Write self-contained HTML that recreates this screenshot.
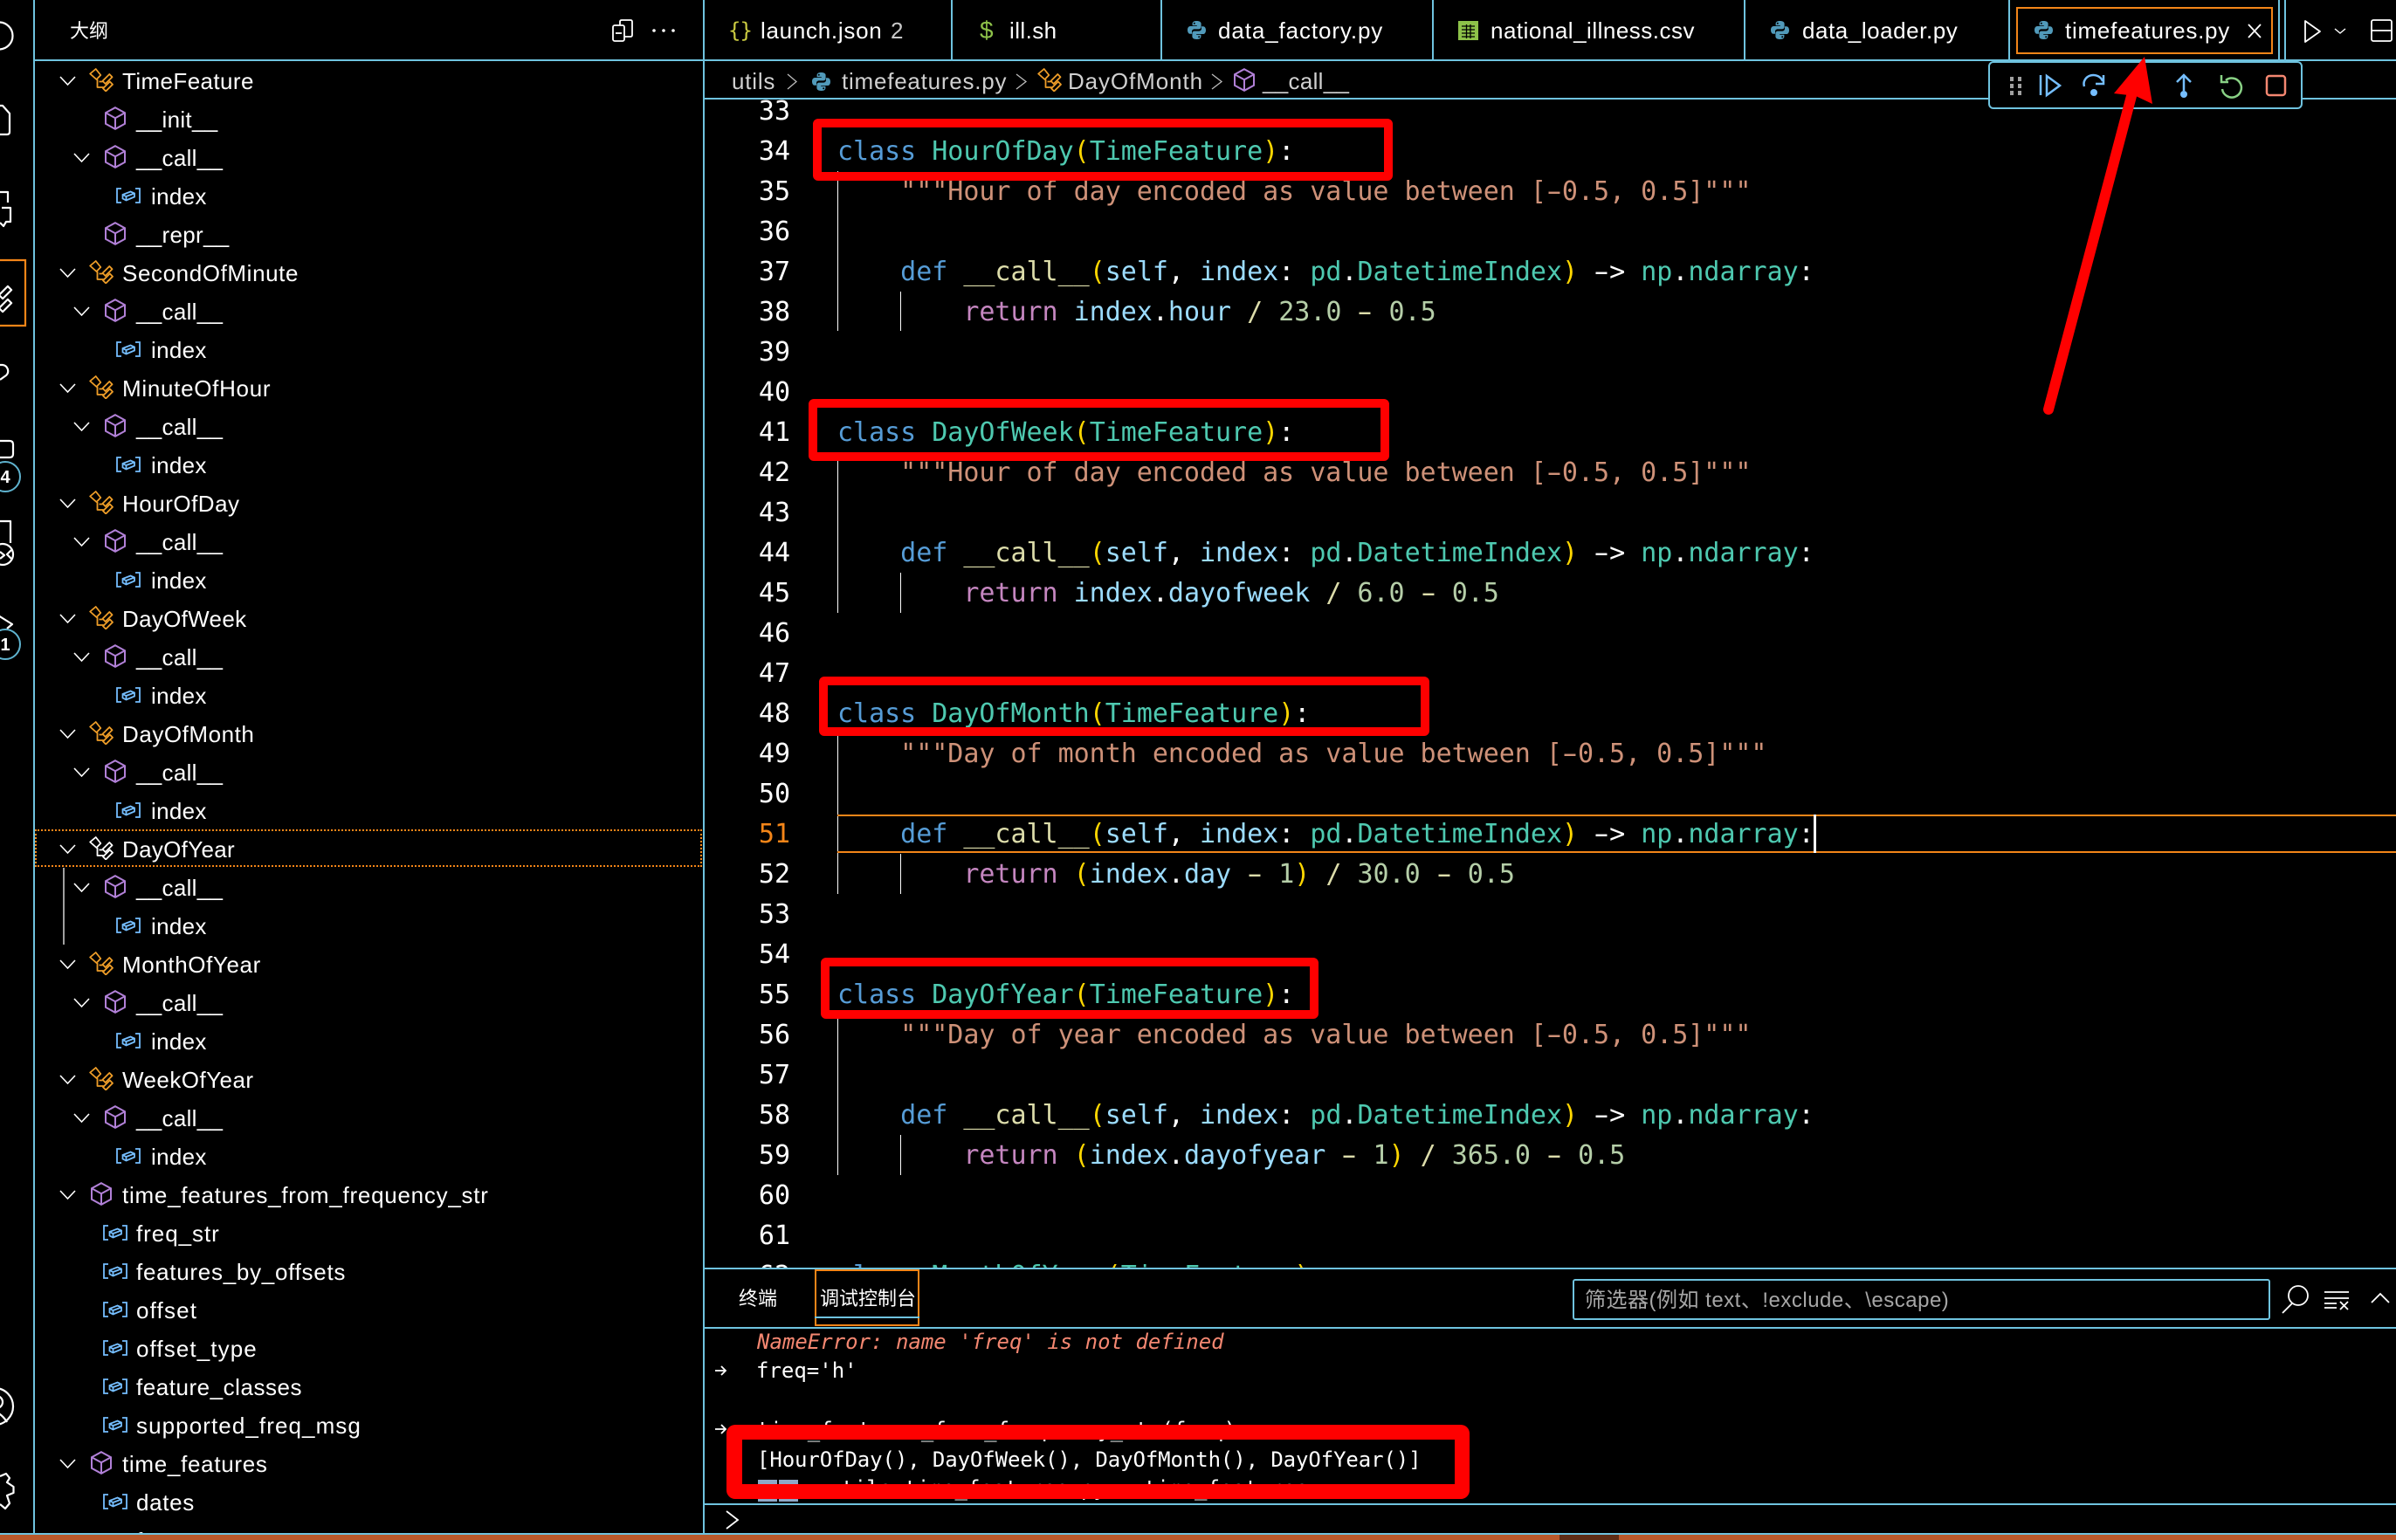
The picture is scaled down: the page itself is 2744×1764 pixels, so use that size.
<!DOCTYPE html>
<html lang="zh">
<head>
<meta charset="utf-8">
<title>timefeatures.py</title>
<style>
html,body{margin:0;padding:0;background:#000;width:2744px;height:1764px;overflow:hidden}
body{position:relative;font-family:"Liberation Sans","Noto Sans CJK SC",sans-serif;color:#fff}
.a{position:absolute}
.h{position:absolute;background:#6fc3df;height:2px}
.v{position:absolute;background:#6fc3df;width:2px}
.tab{position:absolute;top:0;height:68px;line-height:70px;font-size:26px;letter-spacing:.5px;white-space:pre}
.bc{position:absolute;top:70px;height:42px;line-height:46px;font-size:26px;letter-spacing:.3px;color:#d0d0d0;white-space:pre}
#side{position:absolute;left:40px;top:70px;width:765px;height:1686px;overflow:hidden}
.r{position:relative;height:44px;line-height:46px;font-size:26px;letter-spacing:.3px;white-space:pre}
.r svg{position:absolute;overflow:visible}
.r span{position:absolute}
.ch{width:19px;height:11px;top:17px;color:#fff}
.c0{left:28px}.c1{left:44px}
.cl{width:28px;height:27px;left:62px;top:8px;color:#ee9d28}
.cb0{width:24px;height:27px;left:64px;top:8px;color:#b180d7}
.cb1{width:24px;height:27px;left:80px;top:8px;color:#b180d7}
.vr1{width:28px;height:18px;left:78px;top:13px;color:#75beff}
.vr2{width:28px;height:18px;left:93px;top:13px;color:#75beff}
.t0{left:100px}.t1{left:116px}.t2{left:133px}
#ed{position:absolute;left:807px;top:114px;width:1937px;height:1338px;overflow:hidden;font-family:"DejaVu Sans Mono","Liberation Mono",monospace;font-size:30px;letter-spacing:-.02px;color:#fff}
.l{position:absolute;left:152px;height:46px;line-height:46px;white-space:pre;margin-top:1px}
.n{position:absolute;left:40px;width:58px;text-align:right;height:46px;line-height:46px;margin-top:1px}
.k{color:#569cd6}.c{color:#4ec9b0}.b{color:#ffd700}.s{color:#ce9178}.e{color:#c586c0}.i{color:#9cdcfe}.f{color:#dcdcaa}.m{color:#b5cea8}
.mn{display:inline-block;transform:scaleX(1.7)}
.g{position:absolute;background:#fff;width:1px}
.box{position:absolute;border:10px solid #f00;border-radius:6px;box-sizing:border-box}
.con{position:absolute;left:867px;font-family:"DejaVu Sans Mono","Liberation Mono",monospace;font-size:24px;white-space:pre;height:34px;line-height:34px}
</style>
</head>
<body>
<svg width="0" height="0" style="position:absolute">
<symbol id="chev" viewBox="0 0 19 11"><path d="M1 1 9.5 10 18 1" fill="none" stroke="currentColor" stroke-width="1.6"/></symbol>
<symbol id="cls" viewBox="0 0 28 27"><g fill="none" stroke="currentColor" stroke-width="1.8" stroke-linejoin="round"><path d="M7.700 1 13.300 8 8.500 13 1.200 6.500Z"/><path d="M15.500 14.800 23.300 7 26.500 10.200 18.700 18Z"/><path d="M16 23.300 23.800 15.500 27 18.700 19.200 26.500Z"/><path d="M9.500 13V22H16.500M11.500 15.500H15.500"/></g></symbol>
<symbol id="cube" viewBox="0 0 24 27"><path d="M12 1.200 23 7.200V19.800L12 25.800 1 19.800V7.200ZM1 7.200 12 13.200 23 7.200M12 13.200V25.800" fill="none" stroke="currentColor" stroke-width="2"/></symbol>
<symbol id="var" viewBox="0 0 28 18"><g fill="none" stroke="currentColor" stroke-width="1.8"><path d="M6 1H1V17H6M22 1H27V17H22"/><path d="M7.500 8 16.500 4.500 21 6.500V10.500L11.500 14.500 7.500 12.500ZM7.500 8 11.500 10 21 6.500M11.500 10V14.500"/></g></symbol>
<symbol id="py" viewBox="0 0 21 21"><g fill="#519aba"><path d="M10.400 0C7 0 5.600 1.300 5.600 3.200V5.200H10.800V6H3.200C1.200 6 0 7.800 0 10.400 0 13 1.200 14.800 3 14.800H5V12.200C5 10.500 6.200 9.400 7.800 9.400H13C14.400 9.400 15.600 8.300 15.600 6.800V3.200C15.600 1.300 13.800 0 10.400 0ZM7.800 1.800A1 1 0 1 1 7.800 3.800 1 1 0 0 1 7.800 1.800Z"/><path d="M10.600 21C14 21 15.400 19.700 15.400 17.800V15.800H10.200V15H17.800C19.800 15 21 13.200 21 10.600 21 8 19.800 6.200 18 6.200H16V8.800C16 10.500 14.800 11.600 13.200 11.600H8C6.600 11.600 5.400 12.700 5.400 14.200V17.800C5.400 19.700 7.200 21 10.600 21ZM13.200 19.200A1 1 0 1 1 13.200 17.200 1 1 0 0 1 13.200 19.200Z"/></g></symbol>
</svg>

<!-- structural lines -->
<div class="v" style="left:38px;top:0;height:1756px"></div>
<div class="v" style="left:805px;top:0;height:1756px"></div>
<div class="h" style="left:38px;top:68px;width:2706px"></div>
<div class="h" style="left:805px;top:112px;width:1939px"></div>
<div class="h" style="left:805px;top:1452px;width:1939px"></div>
<div class="h" style="left:805px;top:1520px;width:1939px"></div>
<div class="h" style="left:805px;top:1722px;width:1939px"></div>
<div class="h" style="left:0;top:1756px;width:2744px"></div>
<div class="a" style="left:0;top:1758px;width:2744px;height:6px;background:#b9592b"></div>
<div class="a" style="left:1786px;top:1758px;width:68px;height:6px;background:#5e2d16"></div>

<!-- tab separators -->
<div class="v" style="left:1089px;top:0;height:68px"></div>
<div class="v" style="left:1329px;top:0;height:68px"></div>
<div class="v" style="left:1640px;top:0;height:68px"></div>
<div class="v" style="left:1997px;top:0;height:68px"></div>
<div class="v" style="left:2300px;top:0;height:68px"></div>
<div class="v" style="left:2609px;top:0;height:68px"></div>
<div class="v" style="left:2616px;top:0;height:68px"></div>

<!-- sidebar header -->
<div class="a" style="left:80px;top:15px;font-size:22px;line-height:42px;letter-spacing:0">大纲</div>

<!-- outline -->
<div id="side">
<div class="r"><svg class="ch c0"><use href="#chev"/></svg><svg class="cl"><use href="#cls"/></svg><span class="t0" style="letter-spacing:.4px">TimeFeature</span></div>
<div class="r"><svg class="cb1"><use href="#cube"/></svg><span class="t1">__init__</span></div>
<div class="r"><svg class="ch c1"><use href="#chev"/></svg><svg class="cb1"><use href="#cube"/></svg><span class="t1">__call__</span></div>
<div class="r"><svg class="vr2"><use href="#var"/></svg><span class="t2">index</span></div>
<div class="r"><svg class="cb1"><use href="#cube"/></svg><span class="t1">__repr__</span></div>
<div class="r"><svg class="ch c0"><use href="#chev"/></svg><svg class="cl"><use href="#cls"/></svg><span class="t0" style="letter-spacing:.6px">SecondOfMinute</span></div>
<div class="r"><svg class="ch c1"><use href="#chev"/></svg><svg class="cb1"><use href="#cube"/></svg><span class="t1">__call__</span></div>
<div class="r"><svg class="vr2"><use href="#var"/></svg><span class="t2">index</span></div>
<div class="r"><svg class="ch c0"><use href="#chev"/></svg><svg class="cl"><use href="#cls"/></svg><span class="t0" style="letter-spacing:.7px">MinuteOfHour</span></div>
<div class="r"><svg class="ch c1"><use href="#chev"/></svg><svg class="cb1"><use href="#cube"/></svg><span class="t1">__call__</span></div>
<div class="r"><svg class="vr2"><use href="#var"/></svg><span class="t2">index</span></div>
<div class="r"><svg class="ch c0"><use href="#chev"/></svg><svg class="cl"><use href="#cls"/></svg><span class="t0" style="letter-spacing:.5px">HourOfDay</span></div>
<div class="r"><svg class="ch c1"><use href="#chev"/></svg><svg class="cb1"><use href="#cube"/></svg><span class="t1">__call__</span></div>
<div class="r"><svg class="vr2"><use href="#var"/></svg><span class="t2">index</span></div>
<div class="r"><svg class="ch c0"><use href="#chev"/></svg><svg class="cl"><use href="#cls"/></svg><span class="t0">DayOfWeek</span></div>
<div class="r"><svg class="ch c1"><use href="#chev"/></svg><svg class="cb1"><use href="#cube"/></svg><span class="t1">__call__</span></div>
<div class="r"><svg class="vr2"><use href="#var"/></svg><span class="t2">index</span></div>
<div class="r"><svg class="ch c0"><use href="#chev"/></svg><svg class="cl"><use href="#cls"/></svg><span class="t0" style="letter-spacing:.55px">DayOfMonth</span></div>
<div class="r"><svg class="ch c1"><use href="#chev"/></svg><svg class="cb1"><use href="#cube"/></svg><span class="t1">__call__</span></div>
<div class="r"><svg class="vr2"><use href="#var"/></svg><span class="t2">index</span></div>
<div class="r"><svg class="ch c0"><use href="#chev"/></svg><svg class="cl" style="color:#fff"><use href="#cls"/></svg><span class="t0">DayOfYear</span></div>
<div class="r"><svg class="ch c1"><use href="#chev"/></svg><svg class="cb1"><use href="#cube"/></svg><span class="t1">__call__</span></div>
<div class="r"><svg class="vr2"><use href="#var"/></svg><span class="t2">index</span></div>
<div class="r"><svg class="ch c0"><use href="#chev"/></svg><svg class="cl"><use href="#cls"/></svg><span class="t0" style="letter-spacing:.6px">MonthOfYear</span></div>
<div class="r"><svg class="ch c1"><use href="#chev"/></svg><svg class="cb1"><use href="#cube"/></svg><span class="t1">__call__</span></div>
<div class="r"><svg class="vr2"><use href="#var"/></svg><span class="t2">index</span></div>
<div class="r"><svg class="ch c0"><use href="#chev"/></svg><svg class="cl"><use href="#cls"/></svg><span class="t0" style="letter-spacing:.45px">WeekOfYear</span></div>
<div class="r"><svg class="ch c1"><use href="#chev"/></svg><svg class="cb1"><use href="#cube"/></svg><span class="t1">__call__</span></div>
<div class="r"><svg class="vr2"><use href="#var"/></svg><span class="t2">index</span></div>
<div class="r"><svg class="ch c0"><use href="#chev"/></svg><svg class="cb0"><use href="#cube"/></svg><span class="t0" style="letter-spacing:.74px">time_features_from_frequency_str</span></div>
<div class="r"><svg class="vr1"><use href="#var"/></svg><span class="t1" style="letter-spacing:.95px">freq_str</span></div>
<div class="r"><svg class="vr1"><use href="#var"/></svg><span class="t1" style="letter-spacing:.72px">features_by_offsets</span></div>
<div class="r"><svg class="vr1"><use href="#var"/></svg><span class="t1" style="letter-spacing:1.17px">offset</span></div>
<div class="r"><svg class="vr1"><use href="#var"/></svg><span class="t1" style="letter-spacing:1.1px">offset_type</span></div>
<div class="r"><svg class="vr1"><use href="#var"/></svg><span class="t1" style="letter-spacing:.53px">feature_classes</span></div>
<div class="r"><svg class="vr1"><use href="#var"/></svg><span class="t1" style="letter-spacing:1.08px">supported_freq_msg</span></div>
<div class="r"><svg class="ch c0"><use href="#chev"/></svg><svg class="cb0"><use href="#cube"/></svg><span class="t0" style="letter-spacing:.7px">time_features</span></div>
<div class="r"><svg class="vr1"><use href="#var"/></svg><span class="t1" style="letter-spacing:.65px">dates</span></div>
<div class="r"><span class="t1">freq</span></div>
</div>
<div class="a" style="left:40px;top:950px;width:764px;height:43px;box-sizing:border-box;border:2px dotted #f38518"></div>
<div class="a" style="left:72px;top:994px;width:2px;height:88px;background:#a0a0a0"></div>

<!-- tabs -->
<div class="tab" style="left:834px;color:#cbcb41;font-family:'DejaVu Sans Mono',monospace;font-size:24px;letter-spacing:-1px">{}</div>
<div class="tab" style="left:871px;letter-spacing:.72px">launch.json</div>
<div class="tab" style="left:1020px;color:#c8c8c8">2</div>
<div class="tab" style="left:1122px;color:#8dc149;font-size:28px">$</div>
<div class="tab" style="left:1156px;letter-spacing:.42px">ill.sh</div>
<svg class="a" style="left:1360px;top:24px;width:21px;height:21px"><use href="#py"/></svg>
<div class="tab" style="left:1395px;letter-spacing:.89px">data_factory.py</div>
<svg class="a" style="left:1670px;top:24px" width="23" height="22"><rect width="23" height="22" fill="#8dc149"/><path d="M4 6H19M4 10H19M4 14H19M4 18H19M9.500 4V20M14 4V20" stroke="#000" stroke-width="1.300"/></svg>
<div class="tab" style="left:1707px">national_illness.csv</div>
<svg class="a" style="left:2028px;top:24px;width:21px;height:21px"><use href="#py"/></svg>
<div class="tab" style="left:2064px;letter-spacing:.55px">data_loader.py</div>
<div class="a" style="left:2309px;top:8px;width:294px;height:54px;box-sizing:border-box;border:2px solid #f38518"></div>
<svg class="a" style="left:2330px;top:24px;width:21px;height:21px"><use href="#py"/></svg>
<div class="tab" style="left:2365px;letter-spacing:.75px">timefeatures.py</div>

<!-- breadcrumbs -->
<div class="bc" style="left:838px;letter-spacing:.8px">utils</div>
<svg class="a" style="left:930px;top:83px;width:21px;height:21px"><use href="#py"/></svg>
<div class="bc" style="left:964px;letter-spacing:.77px">timefeatures.py</div>
<svg class="a" style="left:1188px;top:78px;width:28px;height:27px;color:#ee9d28"><use href="#cls"/></svg>
<div class="bc" style="left:1223px;letter-spacing:.9px">DayOfMonth</div>
<svg class="a" style="left:1413px;top:78px;width:24px;height:27px;color:#b180d7"><use href="#cube"/></svg>
<div class="bc" style="left:1446px">__call__</div>

<!-- editor -->
<div id="ed">
<div class="g" style="left:152px;top:82px;height:183px"></div>
<div class="g" style="left:224px;top:220px;height:45px"></div>
<div class="g" style="left:152px;top:404px;height:184px"></div>
<div class="g" style="left:224px;top:542px;height:46px"></div>
<div class="g" style="left:152px;top:726px;height:184px"></div>
<div class="g" style="left:224px;top:864px;height:46px"></div>
<div class="g" style="left:152px;top:1048px;height:184px"></div>
<div class="g" style="left:224px;top:1186px;height:46px"></div>
<div class="a" style="left:152px;top:819px;width:1785px;height:44px;box-sizing:border-box;border-top:2px solid #f38518;border-bottom:2px solid #f38518"></div>
<div class="a" style="left:1270px;top:819px;width:3px;height:44px;background:#fff"></div>

<div class="n" style="top:-10px">33</div>
<div class="n" style="top:36px">34</div><div class="l" style="top:36px"><span class="k">class</span> <span class="c">HourOfDay</span><span class="b">(</span><span class="c">TimeFeature</span><span class="b">)</span>:</div>
<div class="n" style="top:82px">35</div><div class="l" style="top:82px"><span class="s">    """Hour of day encoded as value between [<span class="mn">-</span>0.5, 0.5]"""</span></div>
<div class="n" style="top:128px">36</div>
<div class="n" style="top:174px">37</div><div class="l" style="top:174px">    <span class="k">def</span> <span class="f">__call__</span><span class="b">(</span><span class="i">self</span>, <span class="i">index</span>: <span class="c">pd</span>.<span class="c">DatetimeIndex</span><span class="b">)</span> <span class="mn">-</span>&gt; <span class="c">np</span>.<span class="c">ndarray</span>:</div>
<div class="n" style="top:220px">38</div><div class="l" style="top:220px">        <span class="e">return</span> <span class="i">index</span>.<span class="i">hour</span> <span class="f">/</span> <span class="m">23.0</span> <span class="f mn">-</span> <span class="m">0.5</span></div>
<div class="n" style="top:266px">39</div>
<div class="n" style="top:312px">40</div>
<div class="n" style="top:358px">41</div><div class="l" style="top:358px"><span class="k">class</span> <span class="c">DayOfWeek</span><span class="b">(</span><span class="c">TimeFeature</span><span class="b">)</span>:</div>
<div class="n" style="top:404px">42</div><div class="l" style="top:404px"><span class="s">    """Hour of day encoded as value between [<span class="mn">-</span>0.5, 0.5]"""</span></div>
<div class="n" style="top:450px">43</div>
<div class="n" style="top:496px">44</div><div class="l" style="top:496px">    <span class="k">def</span> <span class="f">__call__</span><span class="b">(</span><span class="i">self</span>, <span class="i">index</span>: <span class="c">pd</span>.<span class="c">DatetimeIndex</span><span class="b">)</span> <span class="mn">-</span>&gt; <span class="c">np</span>.<span class="c">ndarray</span>:</div>
<div class="n" style="top:542px">45</div><div class="l" style="top:542px">        <span class="e">return</span> <span class="i">index</span>.<span class="i">dayofweek</span> <span class="f">/</span> <span class="m">6.0</span> <span class="f mn">-</span> <span class="m">0.5</span></div>
<div class="n" style="top:588px">46</div>
<div class="n" style="top:634px">47</div>
<div class="n" style="top:680px">48</div><div class="l" style="top:680px"><span class="k">class</span> <span class="c">DayOfMonth</span><span class="b">(</span><span class="c">TimeFeature</span><span class="b">)</span>:</div>
<div class="n" style="top:726px">49</div><div class="l" style="top:726px"><span class="s">    """Day of month encoded as value between [<span class="mn">-</span>0.5, 0.5]"""</span></div>
<div class="n" style="top:772px">50</div>
<div class="n" style="top:818px;color:#f38518">51</div><div class="l" style="top:818px">    <span class="k">def</span> <span class="f">__call__</span><span class="b">(</span><span class="i">self</span>, <span class="i">index</span>: <span class="c">pd</span>.<span class="c">DatetimeIndex</span><span class="b">)</span> <span class="mn">-</span>&gt; <span class="c">np</span>.<span class="c">ndarray</span>:</div>
<div class="n" style="top:864px">52</div><div class="l" style="top:864px">        <span class="e">return</span> <span class="b">(</span><span class="i">index</span>.<span class="i">day</span> <span class="f mn">-</span> <span class="m">1</span><span class="b">)</span> <span class="f">/</span> <span class="m">30.0</span> <span class="f mn">-</span> <span class="m">0.5</span></div>
<div class="n" style="top:910px">53</div>
<div class="n" style="top:956px">54</div>
<div class="n" style="top:1002px">55</div><div class="l" style="top:1002px"><span class="k">class</span> <span class="c">DayOfYear</span><span class="b">(</span><span class="c">TimeFeature</span><span class="b">)</span>:</div>
<div class="n" style="top:1048px">56</div><div class="l" style="top:1048px"><span class="s">    """Day of year encoded as value between [<span class="mn">-</span>0.5, 0.5]"""</span></div>
<div class="n" style="top:1094px">57</div>
<div class="n" style="top:1140px">58</div><div class="l" style="top:1140px">    <span class="k">def</span> <span class="f">__call__</span><span class="b">(</span><span class="i">self</span>, <span class="i">index</span>: <span class="c">pd</span>.<span class="c">DatetimeIndex</span><span class="b">)</span> <span class="mn">-</span>&gt; <span class="c">np</span>.<span class="c">ndarray</span>:</div>
<div class="n" style="top:1186px">59</div><div class="l" style="top:1186px">        <span class="e">return</span> <span class="b">(</span><span class="i">index</span>.<span class="i">dayofyear</span> <span class="f mn">-</span> <span class="m">1</span><span class="b">)</span> <span class="f">/</span> <span class="m">365.0</span> <span class="f mn">-</span> <span class="m">0.5</span></div>
<div class="n" style="top:1232px">60</div>
<div class="n" style="top:1278px">61</div>
<div class="n" style="top:1324px">62</div><div class="l" style="top:1324px"><span class="k">class</span> <span class="c">MonthOfYear</span><span class="b">(</span><span class="c">TimeFeature</span><span class="b">)</span>:</div>
</div>

<!-- panel header -->
<div class="a" style="left:846px;top:1467px;font-size:22px;line-height:42px">终端</div>
<div class="a" style="left:939px;top:1467px;font-size:22px;line-height:42px">调试控制台</div>
<div class="a" style="left:933px;top:1454px;width:120px;height:65px;box-sizing:border-box;border:2px solid #f38518"></div>
<div class="h" style="left:933px;top:1508px;width:120px"></div>
<div class="a" style="left:1801px;top:1465px;width:799px;height:47px;box-sizing:border-box;border:2px solid #6fc3df;border-radius:3px"></div>
<div class="a" style="left:1815px;top:1467px;height:46px;line-height:46px;font-size:24px;letter-spacing:.5px;color:#a6a6a6;white-space:pre">筛选器(例如 text、!exclude、\escape)</div>

<!-- console -->
<div style="position:absolute;left:807px;top:1522px;width:1937px;height:200px;overflow:hidden">
<div class="con" style="left:60px;top:-2px;color:#f48771;font-style:italic">NameError: name 'freq' is not defined</div>
<div class="con" style="left:59px;top:31px">freq='h'</div>
<div class="con" style="left:60px;top:99px">time_features_from_frequency_str(freq)</div>
<div class="con" style="left:60px;top:133px;letter-spacing:-.1px">[HourOfDay(), DayOfWeek(), DayOfMonth(), DayOfYear()]</div>
<div class="a" style="left:61px;top:173px;width:22px;height:25px;background:#8ea8c8"></div>
<div class="a" style="left:85px;top:173px;width:22px;height:25px;background:#8ea8c8"></div>
<div class="con" style="left:142px;top:166px">utils.time_features.py   time_features</div>
</div>

<!-- debug toolbar -->
<div class="a" style="left:2277px;top:70px;width:360px;height:55px;box-sizing:border-box;background:#000;border:2px solid #6fc3df;border-radius:6px"></div>

<!-- page-coordinate icons -->
<svg class="a" style="left:0;top:0" width="2744" height="1764" viewBox="0 0 2744 1764" fill="none">
<!-- activity bar -->
<g stroke="#fff" stroke-width="2.200" stroke-linejoin="round">
<circle cx="-1" cy="41" r="15.500"/>
<path d="M-2 121H3L11 130V151Q11 154 8 154H-2"/>
<path d="M-2 220H9V232M2 238H12V254H7L4 259 0 255"/>
<path d="M-1.100 337.900 8.900 327.900 13.100 332.100 3.100 342.100Z"/>
<path d="M-1.100 352.900 8.900 342.900 13.100 347.100 3.100 357.100Z"/>
<path d="M-4 418H3A7 7 0 0 1 7 430L0 435"/>
<path d="M-2 505H11Q15 505 15 509V520Q15 524 11 524H-2"/>
<path d="M-2 597H12V622"/>
<circle cx="3" cy="635" r="12"/>
<path d="M0 632 5 636 0 640M13 630 8 635 13 640"/>
<path d="M-2 705 14 715 8 720"/>
<circle cx="-6" cy="1611" r="21"/>
<circle cx="-4" cy="1606" r="7"/>
<path d="M-3 1618Q4 1622 8 1629"/>
<path d="M0 1691 7 1688 11 1693 8 1698 15.500 1703V1710L8 1713 11 1722 6 1728 0 1723"/>
</g>
<path d="M-4 298H29V373H-4" stroke="#f38518" stroke-width="2.200"/>
<circle cx="6" cy="546" r="17" fill="#000" stroke="#5fb3cf" stroke-width="2"/>
<circle cx="6" cy="738" r="17" fill="#000" stroke="#5fb3cf" stroke-width="2"/>
<text x="6" y="553" text-anchor="middle" fill="#fff" font-size="20" font-weight="bold" font-family="Liberation Sans,sans-serif">4</text>
<text x="6" y="745" text-anchor="middle" fill="#fff" font-size="20" font-weight="bold" font-family="Liberation Sans,sans-serif">1</text>
<!-- header icons -->
<g stroke="#fff" stroke-width="1.800">
<path d="M710 29V25Q710 23 712 23H722Q724 23 724 25V40Q724 42 722 42H715"/>
<rect x="702" y="29" width="13" height="18" rx="2"/>
<path d="M705 38H712"/>
<path d="M2575 28 2589 43M2589 28 2575 43"/>
<path d="M2640 24 2657 36 2640 48Z" stroke-linejoin="round"/>
<path d="M2674 33 2680 38 2686 33" stroke-width="1.400"/>
<rect x="2716" y="23" width="23" height="24" rx="2"/>
<path d="M2716 35H2739"/>
<circle cx="2632" cy="1484" r="11"/>
<path d="M2625 1493 2614 1504"/>
<path d="M2662 1480H2690M2662 1487H2690M2662 1493H2676M2662 1498H2676M2680 1491 2689 1500M2689 1491 2680 1500"/>
<path d="M2716 1492 2726 1482 2736 1492"/>
<path d="M832 1731 845 1741 832 1751"/>
<path d="M819 1570H831M826 1565 831 1570 826 1575M819 1637H831M826 1632 831 1637 826 1642"/>
</g>
<g fill="#fff"><circle cx="749" cy="35" r="1.800"/><circle cx="760" cy="35" r="1.800"/><circle cx="771" cy="35" r="1.800"/></g>
<!-- breadcrumb chevrons -->
<g stroke="#bbb" stroke-width="1.300">
<path d="M902 85 912 93.500 902 102M1164 85 1175 93.500 1164 102M1388 85 1399 93.500 1388 102"/>
</g>
<!-- debug toolbar icons -->
<g fill="#a0a0a0">
<rect x="2302" y="88" width="4" height="5"/><rect x="2311" y="88" width="4" height="5"/>
<rect x="2302" y="96" width="4" height="5"/><rect x="2311" y="96" width="4" height="5"/>
<rect x="2302" y="104" width="4" height="5"/><rect x="2311" y="104" width="4" height="5"/>
</g>
<g stroke="#75beff" stroke-width="2.500">
<path d="M2337 86V109"/>
<path d="M2344 87 2359 98 2344 109Z"/>
<path d="M2387 99A11 10 0 0 1 2408 93M2409 86V96H2400"/>
<path d="M2501 86V104M2493 94 2501 86 2509 94"/>
</g>
<g fill="#75beff"><circle cx="2398" cy="106" r="4"/><circle cx="2451" cy="107" r="4"/><circle cx="2501" cy="108" r="4"/></g>
<path d="M2549 92A11 11 0 1 1 2545 102M2544 86V94H2552" stroke="#89d185" stroke-width="2.500"/>
<rect x="2596" y="87" width="21" height="22" rx="3" stroke="#f48771" stroke-width="2.500"/>
</svg>

<!-- red boxes -->
<div class="box" style="left:931px;top:136px;width:664px;height:71px"></div>
<div class="box" style="left:926px;top:457px;width:665px;height:71px"></div>
<div class="box" style="left:938px;top:775px;width:699px;height:68px"></div>
<div class="box" style="left:940px;top:1097px;width:570px;height:70px"></div>
<div class="box" style="left:832px;top:1632px;width:851px;height:85px;border-width:17px 17px 17px 18px;border-radius:10px"></div>

<!-- annotation arrow -->
<svg class="a" style="left:0;top:0" width="2744" height="1764" viewBox="0 0 2744 1764">
<line x1="2441" y1="110" x2="2346" y2="469" stroke="#f00" stroke-width="12" stroke-linecap="round"/>
<polygon points="2456,65 2465,119 2446,110 2421,107" fill="#f00"/>
</svg>
</body>
</html>
